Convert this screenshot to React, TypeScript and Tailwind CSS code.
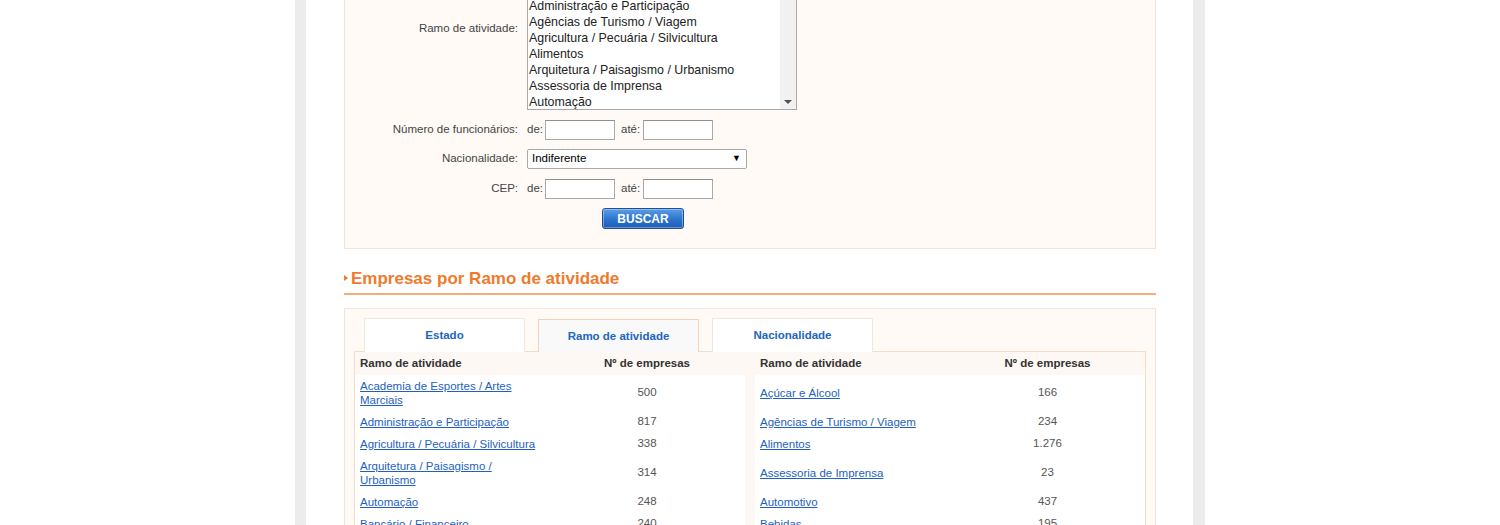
import React from 'react';

const ramos = [
  'Todos',
  'Academia de Esportes / Artes Marciais',
  'Açúcar e Álcool',
  'Administração e Participação',
  'Agências de Turismo / Viagem',
  'Agricultura / Pecuária / Silvicultura',
  'Alimentos',
  'Arquitetura / Paisagismo / Urbanismo',
  'Assessoria de Imprensa',
  'Automação',
];

const rows: [string, string, string, string][] = [
  ['Academia de Esportes / Artes Marciais', '500', 'Açúcar e Álcool', '166'],
  ['Administração e Participação', '817', 'Agências de Turismo / Viagem', '234'],
  ['Agricultura / Pecuária / Silvicultura', '338', 'Alimentos', '1.276'],
  ['Arquitetura / Paisagismo / Urbanismo', '314', 'Assessoria de Imprensa', '23'],
  ['Automação', '248', 'Automotivo', '437'],
  ['Bancário / Financeiro', '240', 'Bebidas', '195'],
  ['Biotecnologia', '58', 'Brinquedos', '41'],
];

const SmallInput = () => (
  <input type="text" className="w-[70px] h-[20px] bg-white border border-[#a9a9a9] border-t-[#8f8f8f] outline-none" />
);

const App: React.FC = () => {
  return (
    <div className="h-[525px] w-[1500px] overflow-hidden bg-white flex justify-center font-['Liberation_Sans',Arial,sans-serif] text-[11.5px] text-[#444]">
      <div className="w-[11px] bg-[#ececec]" />
      <div className="w-[887px] bg-white">
        <div className="mt-[-63px] ml-[38px] w-[812px]">
          {/* Search form */}
          <div className="bg-[#fffaf6] border border-[#efe5dc] pt-[10px] pb-[19px]">
            <div className="flex">
              <div className="w-[182px] pr-[9px] text-right flex items-center justify-end">Ramo de atividade:</div>
              <div className="w-[270px] h-[162px] border border-[#a9a9a9] bg-white flex">
                <div className="flex-1 pt-px">
                  {ramos.map((r) => (
                    <div key={r} className="h-[16px] leading-[16px] pl-[1px] text-[12.4px] text-[#222] whitespace-nowrap overflow-hidden">{r}</div>
                  ))}
                </div>
                <div className="w-[16px] bg-[#f1f1f1] flex flex-col justify-end items-center pb-[5px]">
                  <div className="w-0 h-0 border-x-[4px] border-x-transparent border-t-[4px] border-t-[#505050]" />
                </div>
              </div>
            </div>

            <div className="flex items-center mt-[10px] h-[20px]">
              <div className="w-[182px] pr-[9px] text-right">Número de funcionários:</div>
              <span className="mr-[2px]">de:</span>
              <SmallInput />
              <span className="ml-[6px] mr-[3px]">até:</span>
              <SmallInput />
            </div>

            <div className="flex items-center mt-[9px] h-[20px]">
              <div className="w-[182px] pr-[9px] text-right">Nacionalidade:</div>
              <div className="w-[220px] h-[20px] border border-[#a9a9a9] rounded-[2px] bg-white flex items-center justify-between pl-[4px] pr-[5px] text-black">
                <span>Indiferente</span>
                <span className="text-[9px]">▼</span>
              </div>
            </div>

            <div className="flex items-center mt-[10px] h-[20px]">
              <div className="w-[182px] pr-[9px] text-right">CEP:</div>
              <span className="mr-[2px]">de:</span>
              <SmallInput />
              <span className="ml-[6px] mr-[3px]">até:</span>
              <SmallInput />
            </div>

            <div className="flex mt-[9px] pl-[257px]">
              <button className="w-[82px] h-[21px] rounded-[3px] border border-[#1f4f98] bg-gradient-to-b from-[#5a9ee4] via-[#2f78cf] to-[#1d5db4] shadow-[inset_0_0_0_1px_rgba(255,255,255,0.35)] text-white font-bold text-[12px] leading-none">
                BUSCAR
              </button>
            </div>
          </div>

          {/* Heading */}
          <div className="mt-[18px] flex items-center h-[22px]">
            <div className="w-0 h-0 border-y-[3.5px] border-y-transparent border-l-[4px] border-l-[#f07a28]" />
            <h2 className="ml-[3px] text-[17px] font-bold text-[#f07a2c] leading-none">Empresas por Ramo de atividade</h2>
          </div>
          <div className="mt-[4px] h-[2px] bg-[#f5ab7c]" />

          {/* Tabs panel */}
          <div className="mt-[13px] bg-[#fffaf6] border border-[#efe5dc] pt-[9px] px-[9px] pb-[10px]">
            <div className="flex gap-[13px] pl-[10px] relative z-10 -mb-px">
              <div className="w-[161px] h-[34px] bg-white border border-b-0 border-[#f3e6da] flex items-center justify-center font-bold text-[#2265c2]">Estado</div>
              <div className="w-[161px] h-[33px] mt-[1px] bg-[#f9f9f9] border border-b-0 border-[#f0d3ba] flex items-center justify-center font-bold text-[#2265c2] pt-[2px]">Ramo de atividade</div>
              <div className="w-[161px] h-[34px] bg-white border border-b-0 border-[#f3e6da] flex items-center justify-center font-bold text-[#2265c2]">Nacionalidade</div>
            </div>
            <div className="border border-[#f3dcc8] bg-white">
              <table className="table-fixed border-collapse w-[790px]">
                <colgroup>
                  <col className="w-[194px]" />
                  <col className="w-[196px]" />
                  <col className="w-[10px]" />
                  <col className="w-[195px]" />
                  <col className="w-[195px]" />
                </colgroup>
                <thead>
                  <tr className="bg-[#fdf8f3] h-[23px] text-[#333] font-bold">
                    <th className="text-left px-[5px] font-bold">Ramo de atividade</th>
                    <th className="text-center font-bold">Nº de empresas</th>
                    <th />
                    <th className="text-left px-[5px] font-bold">Ramo de atividade</th>
                    <th className="text-center font-bold">Nº de empresas</th>
                  </tr>
                </thead>
                <tbody>
                  {rows.map((r) => (
                    <tr key={r[0]}>
                      <td className="px-[5px] py-[4px] leading-[14px] align-middle">
                        <a href="#" className="text-[#1f5fc0] underline">{r[0]}</a>
                      </td>
                      <td className="text-center text-[#555] align-middle">{r[1]}</td>
                      <td className="bg-[#fdf8f3]" />
                      <td className="px-[5px] py-[4px] leading-[14px] align-middle">
                        <a href="#" className="text-[#1f5fc0] underline">{r[2]}</a>
                      </td>
                      <td className="text-center text-[#555] align-middle">{r[3]}</td>
                    </tr>
                  ))}
                </tbody>
              </table>
            </div>
          </div>
        </div>
      </div>
      <div className="w-[12px] bg-[#ececec]" />
    </div>
  );
};

export default App;
